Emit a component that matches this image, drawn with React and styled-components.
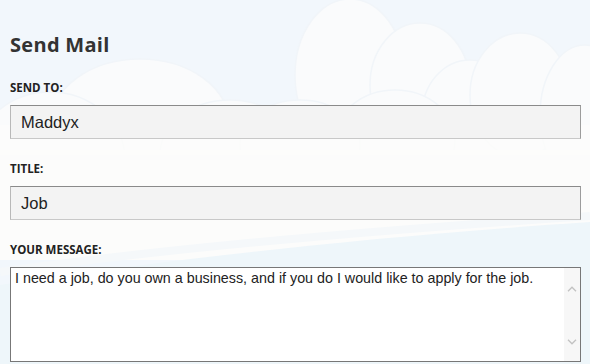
import React from "react";
import styled, { createGlobalStyle } from "styled-components";

const Global = createGlobalStyle`
  html, body { margin: 0; padding: 0; background: #f2f7fc; }
  body { width: 590px; height: 364px; overflow: hidden; }
`;

const Page = styled.div`
  position: relative;
  width: 590px;
  height: 364px;
  overflow: hidden;
  background: #f2f7fc;
`;

const Backdrop = styled.svg`
  position: absolute;
  inset: 0;
  width: 590px;
  height: 364px;
  z-index: 0;
`;

const Form = styled.form`
  position: relative;
  z-index: 1;
  display: flex;
  flex-direction: column;
  padding: 33px 9px 0 10px;
`;

const Heading = styled.h1`
  margin: 0 0 24px;
  font-family: "Open Sans", "DejaVu Sans", sans-serif;
  font-weight: 700;
  font-size: 20px;
  line-height: 24px;
  letter-spacing: 0.3px;
  color: #333333;
`;

const Field = styled.div`
  display: flex;
  flex-direction: column;
  margin-bottom: ${(p) => p.$gap ?? 23}px;
`;

const Label = styled.label`
  font-family: "Open Sans", "DejaVu Sans", sans-serif;
  font-weight: 700;
  font-size: 11.5px;
  line-height: 14px;
  color: #222222;
  text-transform: uppercase;
  margin-bottom: ${(p) => p.$gap ?? 10}px;
`;

const TextInput = styled.input`
  box-sizing: border-box;
  width: 571px;
  height: 34px;
  margin: 0;
  padding: 0 10px;
  border: 1px solid #c8c8c8;
  border-top-color: #8a8a8a;
  border-left-color: #b8b8b8;
  border-right-color: #9c9c9c;
  background: #f3f3f3;
  font-family: "Liberation Sans", Arial, sans-serif;
  font-size: 16.5px;
  color: #222222;
  outline: none;
`;

const MessageBox = styled.div`
  box-sizing: border-box;
  display: flex;
  width: 571px;
  height: 95px;
  border: 1px solid #777777;
  background: #ffffff;
`;

const MessageArea = styled.textarea`
  flex: 1;
  margin: 0;
  padding: 2px 4px;
  border: none;
  resize: none;
  overflow: hidden;
  background: transparent;
  font-family: "Liberation Sans", Arial, sans-serif;
  font-size: 14.3px;
  line-height: 17px;
  color: #222222;
  outline: none;
`;

const Track = styled.div`
  width: 16px;
  display: flex;
  flex-direction: column;
  justify-content: space-between;
  align-items: center;
  padding: 18px 0 16px;
  background: #f7f7f7;
`;

const Chevron = ({ up }) => (
  <svg width="10" height="6" viewBox="0 0 10 6">
    <path
      d={up ? "M1 5.2 L5 1.2 L9 5.2" : "M1 0.8 L5 4.8 L9 0.8"}
      fill="none"
      stroke="#c2c2c2"
      strokeWidth="1.3"
    />
  </svg>
);

const Clouds = () => (
  <Backdrop viewBox="0 0 590 364" preserveAspectRatio="none">
    <rect x="0" y="0" width="590" height="364" fill="#f2f7fc" />
    <g fill="#fafbfc" stroke="#f1f5f9" strokeWidth="1.5">
      <ellipse cx="140" cy="125" rx="90" ry="66" />
      <ellipse cx="50" cy="160" rx="75" ry="68" />
      <ellipse cx="230" cy="155" rx="70" ry="55" />
      <ellipse cx="350" cy="75" rx="55" ry="76" />
      <ellipse cx="420" cy="85" rx="50" ry="62" />
      <ellipse cx="470" cy="115" rx="48" ry="55" />
      <ellipse cx="520" cy="95" rx="50" ry="62" />
      <ellipse cx="585" cy="115" rx="45" ry="70" />
      <ellipse cx="395" cy="140" rx="60" ry="50" />
      <ellipse cx="300" cy="145" rx="60" ry="45" />
    </g>
    <rect x="0" y="150" width="590" height="110" fill="#fcfcfb" />
    <rect x="0" y="125" width="590" height="30" fill="#fcfcfb" opacity="0.8" />
    <path d="M0 285 C 150 262, 350 238, 590 222 L590 364 L0 364 Z" fill="#eef6fa" />
    <path d="M0 272 C 150 250, 350 232, 590 216" fill="none" stroke="#f5f8fa" strokeWidth="8" />
  </Backdrop>
);

export default function App() {
  return (
    <>
      <Global />
      <Page>
        <Clouds />
        <Form onSubmit={(e) => e.preventDefault()}>
          <Heading>Send Mail</Heading>
          <Field>
            <Label htmlFor="to">Send To:</Label>
            <TextInput id="to" defaultValue="Maddyx" />
          </Field>
          <Field>
            <Label htmlFor="title">Title:</Label>
            <TextInput id="title" defaultValue="Job" />
          </Field>
          <Field $gap={0}>
            <Label htmlFor="msg" $gap={10}>Your Message:</Label>
            <MessageBox>
              <MessageArea
                id="msg"
                defaultValue="I need a job, do you own a business, and if you do I would like to apply for the job."
              />
              <Track>
                <Chevron up />
                <Chevron />
              </Track>
            </MessageBox>
          </Field>
        </Form>
      </Page>
    </>
  );
}
